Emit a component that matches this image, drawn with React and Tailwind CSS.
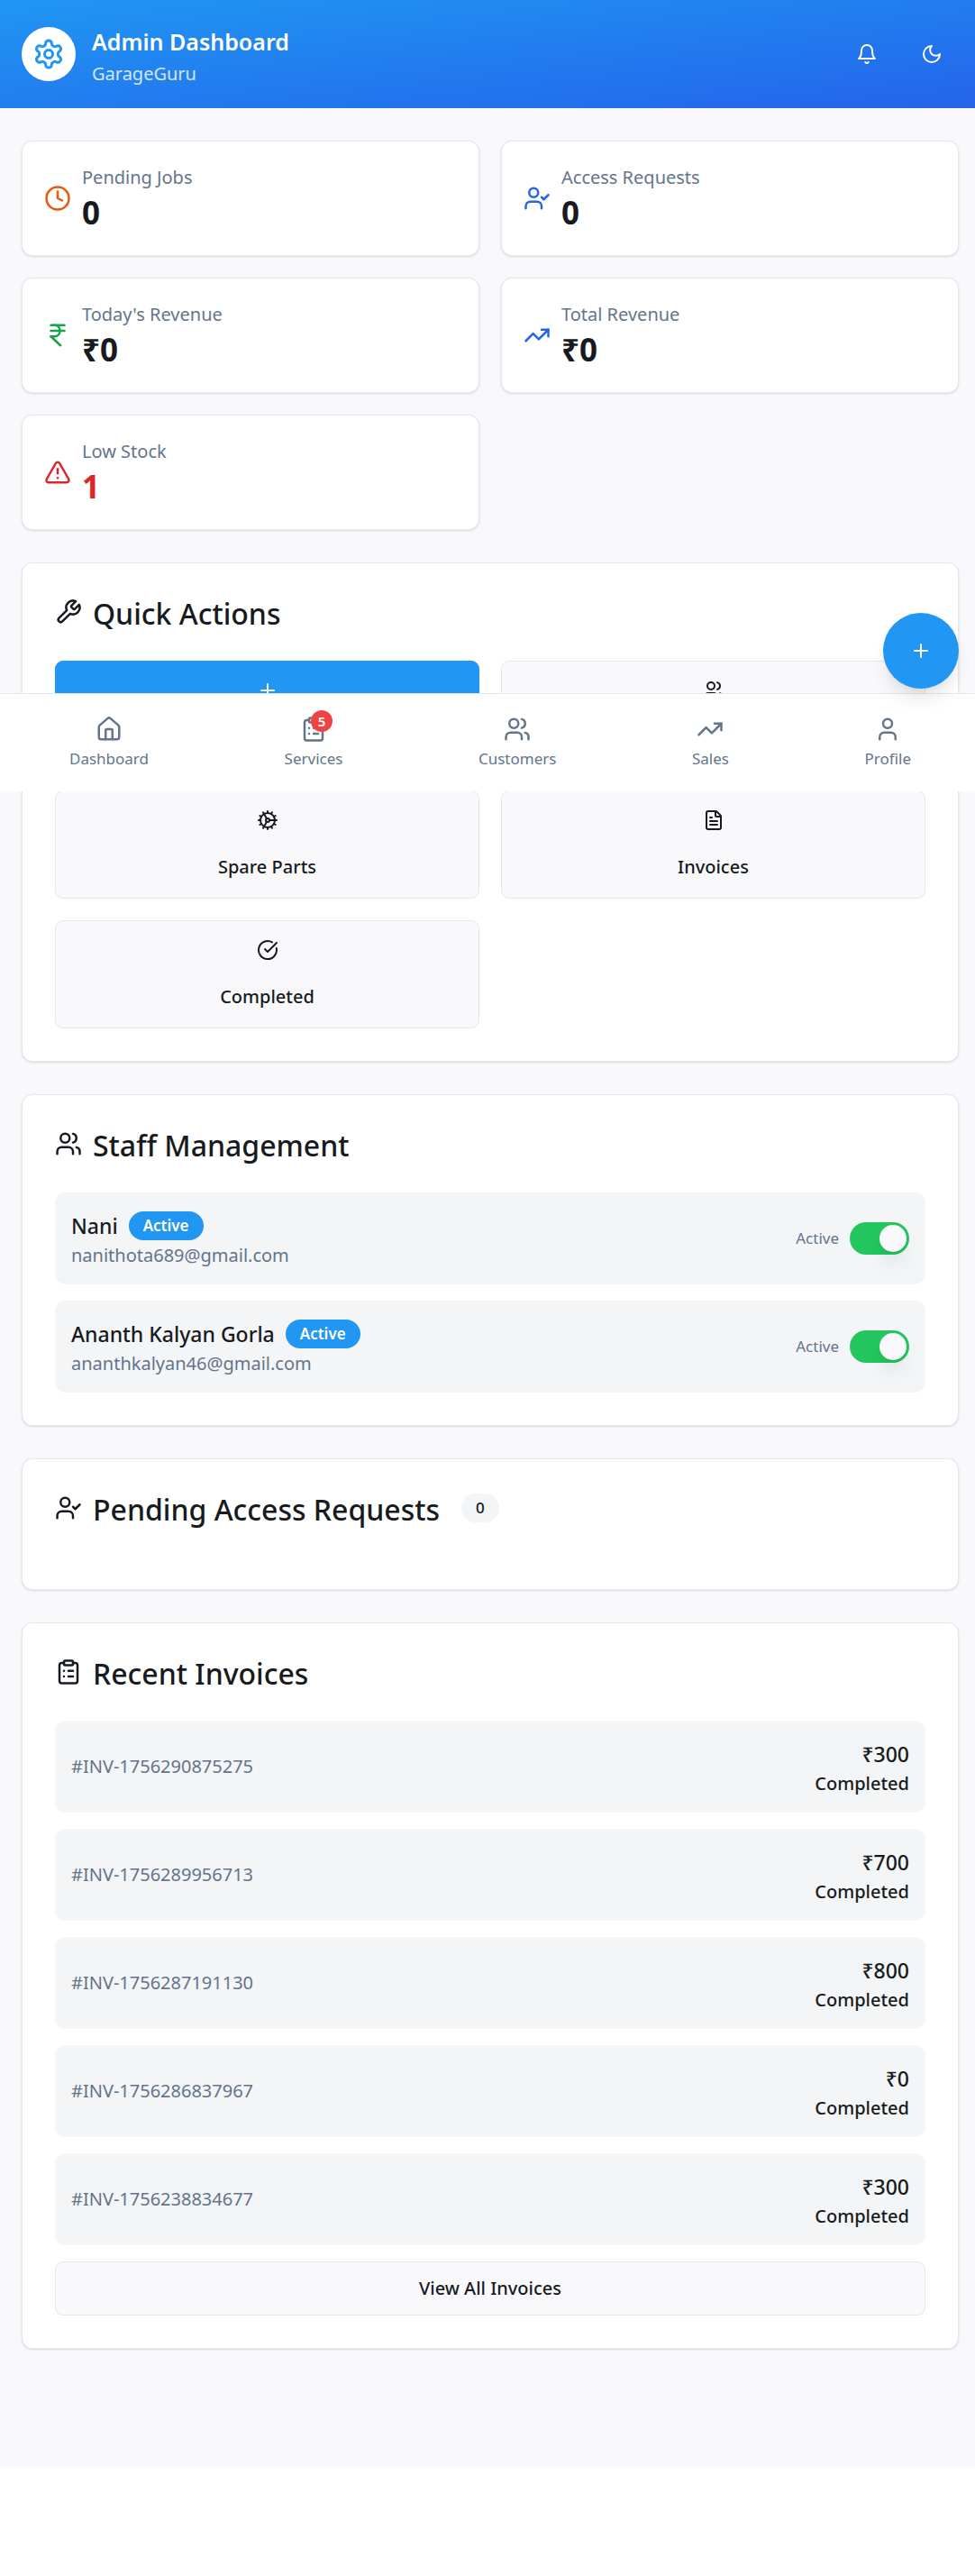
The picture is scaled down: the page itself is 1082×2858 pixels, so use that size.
import { useState } from 'react';
import {
  Clock, UserCheck, IndianRupee, TrendingUp, TriangleAlert,
  Plus, Users, Cog, FileText, CircleCheckBig, House, ClipboardList, User,
} from 'lucide-react';

function Glyph({ size = 24, className = '', children }) {
  return (
    <svg
      width={size}
      height={size}
      viewBox="0 0 24 24"
      fill="none"
      stroke="currentColor"
      strokeWidth="2"
      strokeLinecap="round"
      strokeLinejoin="round"
      className={className}
      aria-hidden="true"
    >
      {children}
    </svg>
  );
}

function Bell(props) {
  return (
    <Glyph {...props}>
      <path d="M6 8a6 6 0 0 1 12 0c0 7 3 9 3 9H3s3-2 3-9" />
      <path d="M10.3 21a1.94 1.94 0 0 0 3.4 0" />
    </Glyph>
  );
}

function Moon(props) {
  return (
    <Glyph {...props}>
      <path d="M12 3a6 6 0 0 0 9 9 9 9 0 1 1-9-9Z" />
    </Glyph>
  );
}

function Settings(props) {
  return (
    <Glyph {...props}>
      <path d="M12.22 2h-.44a2 2 0 0 0-2 2v.18a2 2 0 0 1-1 1.73l-.43.25a2 2 0 0 1-2 0l-.15-.08a2 2 0 0 0-2.73.73l-.22.38a2 2 0 0 0 .73 2.73l.15.1a2 2 0 0 1 1 1.72v.51a2 2 0 0 1-1 1.74l-.15.09a2 2 0 0 0-.73 2.73l.22.38a2 2 0 0 0 2.73.73l.15-.08a2 2 0 0 1 2 0l.43.25a2 2 0 0 1 1 1.73V20a2 2 0 0 0 2 2h.44a2 2 0 0 0 2-2v-.18a2 2 0 0 1 1-1.73l.43-.25a2 2 0 0 1 2 0l.15.08a2 2 0 0 0 2.73-.73l.22-.39a2 2 0 0 0-.73-2.73l-.15-.08a2 2 0 0 1-1-1.74v-.5a2 2 0 0 1 1-1.74l.15-.09a2 2 0 0 0 .73-2.73l-.22-.38a2 2 0 0 0-2.73-.73l-.15.08a2 2 0 0 1-2 0l-.43-.25a2 2 0 0 1-1-1.73V4a2 2 0 0 0-2-2z" />
      <circle cx="12" cy="12" r="3" />
    </Glyph>
  );
}

function Wrench(props) {
  return (
    <Glyph {...props}>
      <path d="M14.7 6.3a1 1 0 0 0 0 1.4l1.6 1.6a1 1 0 0 0 1.4 0l3.77-3.77a6 6 0 0 1-7.94 7.94l-6.91 6.91a2.12 2.12 0 0 1-3-3l6.91-6.91a6 6 0 0 1 7.94-7.94l-3.76 3.76z" />
    </Glyph>
  );
}

const stats = [
  { label: 'Pending Jobs', value: '0', Icon: Clock, tone: 'text-[#ea580c]', valueTone: 'text-[#171b20]' },
  { label: 'Access Requests', value: '0', Icon: UserCheck, tone: 'text-[#2563eb]', valueTone: 'text-[#171b20]' },
  { label: "Today's Revenue", value: '₹0', Icon: IndianRupee, tone: 'text-[#16a34a]', valueTone: 'text-[#171b20]' },
  { label: 'Total Revenue', value: '₹0', Icon: TrendingUp, tone: 'text-[#2563eb]', valueTone: 'text-[#171b20]' },
  { label: 'Low Stock', value: '1', Icon: TriangleAlert, tone: 'text-[#dc2626]', valueTone: 'text-[#dc2626]' },
];

// The first row sits behind the tab bar, so its buttons carry only an accessible name.
const actions = [
  { label: 'Add', Icon: Plus, primary: true, covered: true },
  { label: 'Customers', Icon: Users, covered: true },
  { label: 'Spare Parts', Icon: Cog },
  { label: 'Invoices', Icon: FileText },
  { label: 'Completed', Icon: CircleCheckBig },
];

const staff = [
  { id: 'nani', name: 'Nani', email: 'nanithota689@gmail.com' },
  { id: 'ananth', name: 'Ananth Kalyan Gorla', email: 'ananthkalyan46@gmail.com' },
];

const invoices = [
  { id: '#INV-1756290875275', amount: '₹300' },
  { id: '#INV-1756289956713', amount: '₹700' },
  { id: '#INV-1756287191130', amount: '₹800' },
  { id: '#INV-1756286837967', amount: '₹0' },
  { id: '#INV-1756238834677', amount: '₹300' },
];

const tabs = [
  { label: 'Dashboard', Icon: House },
  { label: 'Services', Icon: ClipboardList, count: 5 },
  { label: 'Customers', Icon: Users },
  { label: 'Sales', Icon: TrendingUp },
  { label: 'Profile', Icon: User },
];

const card = 'rounded-xl border border-[#e2e8f0] bg-white shadow-sm';

function Section({ title, Icon, badge, children }) {
  return (
    <section className={`${card} p-9`}>
      <div className="mb-9 flex h-9 items-center">
        <Icon size={30} className="mr-3 shrink-0" aria-hidden="true" />
        <h2 className="self-start text-[32px] leading-10 font-medium whitespace-nowrap">{title}</h2>
        {badge}
      </div>
      {children}
    </section>
  );
}

function StaffRow({ person }) {
  const [on, setOn] = useState(true);
  return (
    <li className="flex items-center justify-between rounded-xl bg-[#f3f5f7] p-[18px]">
      <div>
        <div className="flex items-center gap-3">
          <p className="text-[23px] leading-[38px] font-medium">{person.name}</p>
          <span className="rounded-full bg-[#2196f3] px-4 text-[17px] leading-8 font-semibold text-white">Active</span>
        </div>
        <p className="text-[20px] leading-7 text-[#64748b]">{person.email}</p>
      </div>
      <div className="flex items-center gap-3">
        <label htmlFor={person.id} className="text-[17px] leading-6 text-[#64748b]">Active</label>
        <input
          id={person.id}
          type="checkbox"
          role="switch"
          checked={on}
          onChange={(e) => setOn(e.target.checked)}
          className="flex h-9 w-[66px] appearance-none items-center rounded-full bg-[#e2e8f0] p-[3px] before:block before:size-[30px] before:rounded-full before:bg-[#f9f9fc] before:shadow-[0_15px_22px_-4px_rgba(0,0,0,0.1),0_6px_9px_-6px_rgba(0,0,0,0.1)] checked:justify-end checked:bg-[#22c55e]"
        />
      </div>
    </li>
  );
}

export default function App() {
  return (
    <div className="relative w-full bg-white pb-[120px] font-['Noto_Sans','Open_Sans',sans-serif] text-[#171b20]">
      <header className="flex items-center justify-between bg-linear-to-br from-[#2196f3] to-[#2563eb] py-6 pr-[18px] pl-6 text-white">
        <div className="flex items-center gap-[18px]">
          <div className="flex size-[60px] items-center justify-center rounded-full bg-white text-[#2196f3]">
            <Settings size={36} />
          </div>
          <div>
            <h1 className="text-[25px] leading-[44px] font-semibold">Admin Dashboard</h1>
            <p className="text-[20px] leading-7 text-white/80">GarageGuru</p>
          </div>
        </div>
        <div className="flex gap-3">
          <button type="button" aria-label="Notifications" className="flex size-[60px] items-center justify-center">
            <Bell size={24} />
          </button>
          <button type="button" aria-label="Toggle dark mode" className="flex size-[60px] items-center justify-center">
            <Moon size={24} />
          </button>
        </div>
      </header>

      <main className="flex flex-col gap-9 bg-[#f9f9fc] pt-9 pr-[18px] pb-[132px] pl-6">
        <div className="grid grid-cols-2 gap-6">
          {stats.map(({ label, value, Icon, tone, valueTone }) => (
            <div key={label} className={`${card} flex items-center gap-3 p-6`}>
              <Icon size={30} className={`shrink-0 ${tone}`} aria-hidden="true" />
              <div>
                <p className="text-[20px] leading-8 text-[#64748b]">{label}</p>
                <p className={`text-[35px] leading-[46px] font-bold ${valueTone}`}>{value}</p>
              </div>
            </div>
          ))}
        </div>

        <Section title="Quick Actions" Icon={Wrench}>
          <div className="grid grid-cols-2 gap-6">
            {actions.map(({ label, Icon, primary, covered }) => (
              <button
                key={label}
                type="button"
                aria-label={label}
                className={`flex h-[120px] flex-col items-center gap-6 rounded-[9px] border pt-5 text-[20px] leading-8 font-medium ${
                  primary ? 'border-[#2196f3] bg-[#2196f3] text-white' : 'border-[#e2e8f0] bg-[#f9f9fc]'
                }`}
              >
                <Icon size={24} className="shrink-0" aria-hidden="true" />
                {!covered && <span>{label}</span>}
              </button>
            ))}
          </div>
        </Section>

        <Section title="Staff Management" Icon={Users}>
          <ul className="flex flex-col gap-[18px]">
            {staff.map((person) => (
              <StaffRow key={person.id} person={person} />
            ))}
          </ul>
        </Section>

        <Section
          title="Pending Access Requests"
          Icon={UserCheck}
          badge={
            <span className="ml-6 rounded-full bg-[#f3f5f7] px-4 text-[17px] leading-8 font-medium">0</span>
          }
        />

        <Section title="Recent Invoices" Icon={ClipboardList}>
          <div className="flex flex-col gap-[18px]">
            {invoices.map(({ id, amount }) => (
              <div key={id} className="flex items-center justify-between rounded-xl bg-[#f3f5f7] p-[18px]">
                <p className="text-[20px] leading-8 text-[#64748b]">{id}</p>
                <div className="text-right font-medium">
                  <p className="text-[23px] leading-[38px]">{amount}</p>
                  <p className="text-[20px] leading-7">Completed</p>
                </div>
              </div>
            ))}
            <button
              type="button"
              className="h-[60px] rounded-[9px] border border-[#e2e8f0] bg-[#f9f9fc] text-[20px] leading-8 font-medium"
            >
              View All Invoices
            </button>
          </div>
        </Section>
      </main>

      <nav
        aria-label="Main"
        className="absolute inset-x-0 top-[769px] flex justify-between border-t border-[#e2e8f0] bg-white py-3 pr-[53px] pl-[59px] text-[#64748b]"
      >
        {tabs.map(({ label, Icon, count }) => (
          <a key={label} href="#" className="flex flex-col items-center gap-1.5 px-[18px] py-3">
            <span className="relative">
              <Icon size={30} aria-hidden="true" />
              {count && (
                <span className="absolute -top-1.5 -right-1.5 flex size-6 items-center justify-center rounded-full bg-[#ef4444] text-[15px] leading-6 font-semibold text-white">
                  {count}
                </span>
              )}
            </span>
            <span className="text-[17px] leading-6">{label}</span>
          </a>
        ))}
      </nav>

      <button
        type="button"
        aria-label="Add"
        className="absolute top-[680px] right-[18px] flex size-[84px] items-center justify-center rounded-full bg-[#2196f3] text-white shadow-[0_15px_22px_-4px_rgba(0,0,0,0.1),0_6px_9px_-6px_rgba(0,0,0,0.1)]"
      >
        <Plus size={24} />
      </button>
    </div>
  );
}
